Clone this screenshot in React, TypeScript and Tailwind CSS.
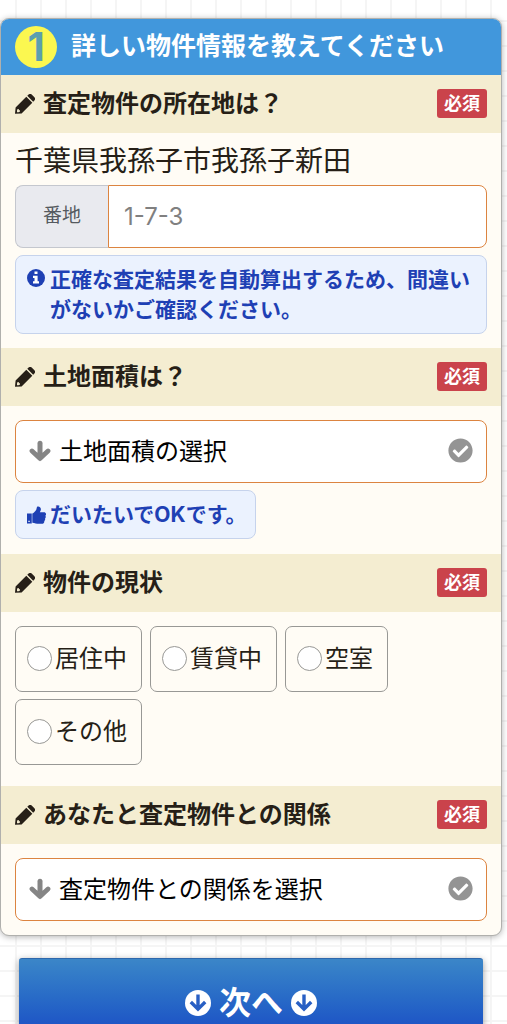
import { useState } from "react";
import type { ReactNode } from "react";
import { FaCheckCircle } from "react-icons/fa";

interface IconProps {
  className?: string;
}

interface SectionProps {
  title: string;
  htmlFor?: string;
  id?: string;
  children: ReactNode;
}

interface SelectFieldProps {
  id: string;
  placeholder: string;
  options: string[];
}

const areaOptions = ["50㎡未満", "50〜100㎡", "100〜200㎡", "200㎡以上"];
const relationOptions = ["所有者本人", "所有者の家族", "その他"];
const statusOptions = ["居住中", "賃貸中", "空室", "その他"];

const PencilIcon = ({ className }: IconProps) => (
  <svg viewBox="0 0 20 20" fill="currentColor" aria-hidden="true" className={className}>
    <path
      fillRule="evenodd"
      d="M0 19.800.6 13.400 11.300 2.700 17.300 8.700 6.600 19.400ZM2.600 15 2 16.600v1.600h1.600l1.400-.8v-1.200H3.800V15Z"
    />
    <path d="M12.300 1.800 13.600.6a2.200 2.200 0 0 1 3.100 0l2.700 2.700a2.200 2.200 0 0 1 0 3.100l-1.200 1.300Z" />
  </svg>
);

const ArrowDownIcon = ({ className }: IconProps) => (
  <svg viewBox="0 0 22 22" fill="none" stroke="currentColor" strokeLinejoin="round" strokeLinecap="round" aria-hidden="true" className={className}>
    <path d="M11 3.200v13.800" strokeWidth="5" />
    <path d="m3 11 8 7.600 8-7.600" strokeWidth="4.800" />
    <path d="m8 13.500 3 3 3-3" strokeWidth="2" />
  </svg>
);

const CircleArrowIcon = ({ className }: IconProps) => (
  <svg viewBox="0 0 26 26" fill="none" aria-hidden="true" className={className}>
    <circle cx="13" cy="13" r="13" fill="white" />
    <path d="M13 4.500V18m-7.200-6 7.200 7.200 7.200-7.200" stroke="#285fc4" strokeWidth="3.400" />
  </svg>
);

const InfoIcon = ({ className }: IconProps) => (
  <svg viewBox="0 0 18 18" aria-hidden="true" className={className}>
    <circle cx="9" cy="9" r="9" fill="currentColor" />
    <path d="M7.500 2.500h3v2.600h-3ZM6 6.700h4.600v5.600H12v2.200H6v-2.200h1.500V8.900H6Z" fill="white" />
  </svg>
);

const ThumbIcon = ({ className }: IconProps) => (
  <svg viewBox="0 0 20 20" fill="currentColor" aria-hidden="true" className={className}>
    <path fillRule="evenodd" d="M0 8h5v10.500H0Zm1.400 7.400v1.500h1.500v-1.500Z" />
    <path d="M5.600 8c1.600-.7 3-2.700 4-3.900.7-1 .5-3 1.400-3.500 1.300-.6 3.500.3 3.600 2.500.1 1.500-.8 2.500-1.100 3.500h4.300c2.400 0 2.900 2.600 1.500 3.700.8 1 .5 2.300-.3 2.900.4 1.100 0 2.100-.8 2.600.2 1.900-.9 3-2.700 3h-3c-2.600 0-4.300-1.200-6.900-1.300Z" />
  </svg>
);

const Section = ({ title, htmlFor, id, children }: SectionProps) => (
  <section>
    <div className="flex h-[58px] items-center justify-between bg-[#f4edd1] px-[14px] pb-[1px]">
      <h2 id={id} className="flex items-center gap-2 text-[24px] leading-8 font-bold">
        <PencilIcon className="size-5 shrink-0" />
        {htmlFor ? <label htmlFor={htmlFor}>{title}</label> : title}
      </h2>
      <span className="shrink-0 rounded-[3px] bg-[#ca434b] px-[7px] text-[18px] leading-[29px] font-bold text-white">
        必須
      </span>
    </div>
    {children}
  </section>
);

const SelectField = ({ id, placeholder, options }: SelectFieldProps) => (
  <div className="relative">
    <select
      id={id}
      defaultValue=""
      className="block h-[63px] w-full appearance-none rounded-lg border border-[#dc8440] bg-white pr-12 pl-[43px] text-[24px] text-black"
    >
      <option value="">{placeholder}</option>
      {options.map((option) => (
        <option key={option} value={option}>{option}</option>
      ))}
    </select>
    <ArrowDownIcon className="pointer-events-none absolute top-5 left-[14px] size-[22px] text-[#858585]" />
    <FaCheckCircle className="pointer-events-none absolute top-[18px] right-[14px] size-[25px] text-[#949494]" />
  </div>
);

const App = () => {
  const [status, setStatus] = useState("");

  return (
    <div className="min-h-screen bg-white bg-[linear-gradient(to_right,#f5f5f5_2px,transparent_2px),linear-gradient(to_bottom,#f5f5f5_2px,transparent_2px)] bg-[size:25px_25px] bg-[position:15px_20px] pt-[18px] pr-[5px] font-['Inter','Noto_Sans_CJK_JP',sans-serif] text-[#261f17]">
      <form onSubmit={(e) => e.preventDefault()}>
        <div className="overflow-hidden rounded-[9px] border border-[#b0b0ad] bg-[#fffcf5] shadow-[0_1px_6px_rgba(0,0,0,0.3)]">
          <h1 className="flex h-14 items-center gap-[14px] bg-[#4197dc] px-[14px] text-[25px] font-bold text-white">
            <span className="flex size-[42px] shrink-0 items-center justify-center rounded-full bg-[#fbf750] text-[40px] leading-none text-[#5b9fae]">
              1
            </span>
            詳しい物件情報を教えてください
          </h1>

          <Section title="査定物件の所在地は？" htmlFor="address">
            <div className="px-[14px] pt-2 pb-[14px]">
              <p className="mb-1 text-[28px] leading-10">千葉県我孫子市我孫子新田</p>
              <div className="flex h-[63px]">
                <label
                  htmlFor="address"
                  className="flex w-[93px] items-center justify-center rounded-l-lg border border-r-0 border-[#c4c7ce] bg-[#e9eaef] text-[19px] text-[#555a60]"
                >
                  番地
                </label>
                <input
                  id="address"
                  type="text"
                  placeholder="1-7-3"
                  className="min-w-0 flex-1 rounded-r-lg border border-[#dc8440] bg-white px-[15px] text-[24px] placeholder:text-[#808080]"
                />
              </div>
              <div className="mt-[7px] flex gap-[5px] rounded-lg border border-[#c6d3ec] bg-[#ebf2fe] pt-[9px] pr-3 pb-2 pl-[11px] text-[21px] leading-[30px] font-bold text-[#1e40b4]">
                <InfoIcon className="mt-1 size-[18px] shrink-0" />
                <p>正確な査定結果を自動算出するため、間違いがないかご確認ください。</p>
              </div>
            </div>
          </Section>

          <Section title="土地面積は？" htmlFor="area">
            <div className="px-[14px] pt-[14px] pb-[15px]">
              <SelectField id="area" placeholder="土地面積の選択" options={areaOptions} />
              <div className="mt-[7px] flex w-fit items-center gap-[4px] rounded-lg border border-[#c6d3ec] bg-[#ebf2fe] pt-[9px] pr-2 pb-2 pl-[11px] text-[21px] leading-[30px] font-bold text-[#1e40b4]">
                <ThumbIcon className="size-[19px] shrink-0" />
                <p>だいたいでOKです。</p>
              </div>
            </div>
          </Section>

          <Section title="物件の現状" id="status-title">
            <div
              role="radiogroup"
              aria-labelledby="status-title"
              className="flex flex-wrap gap-x-2 gap-y-[7px] px-[14px] pt-[14px] pb-[21px]"
            >
              {statusOptions.map((option) => (
                <label
                  key={option}
                  className="flex h-[66px] items-center gap-[3px] rounded-[7px] border border-[#989895] pr-[14px] pb-[1px] pl-[11px] text-[24px]"
                >
                  <input
                    type="radio"
                    name="status"
                    value={option}
                    checked={status === option}
                    onChange={() => setStatus(option)}
                    className="size-[25px] appearance-none rounded-full border border-[#989895] bg-white checked:border-[7px] checked:border-[#4197dc]"
                  />
                  {option}
                </label>
              ))}
            </div>
          </Section>

          <Section title="あなたと査定物件との関係" htmlFor="relation">
            <div className="p-[14px]">
              <SelectField id="relation" placeholder="査定物件との関係を選択" options={relationOptions} />
            </div>
          </Section>
        </div>

        <div className="px-[19px] pt-[22px]">
          <button
            type="submit"
            className="flex h-[88px] w-full items-center justify-center gap-2 rounded-[3px] border-t border-[#2d67ac] bg-linear-to-b from-[#3b86c8] to-[#1b43c4] text-[32px] font-bold text-white shadow-[0_2px_7px_rgba(0,0,0,0.4)]"
          >
            <CircleArrowIcon className="size-[26px]" />
            次へ
            <CircleArrowIcon className="size-[26px]" />
          </button>
        </div>
      </form>
    </div>
  );
};

export default App;
